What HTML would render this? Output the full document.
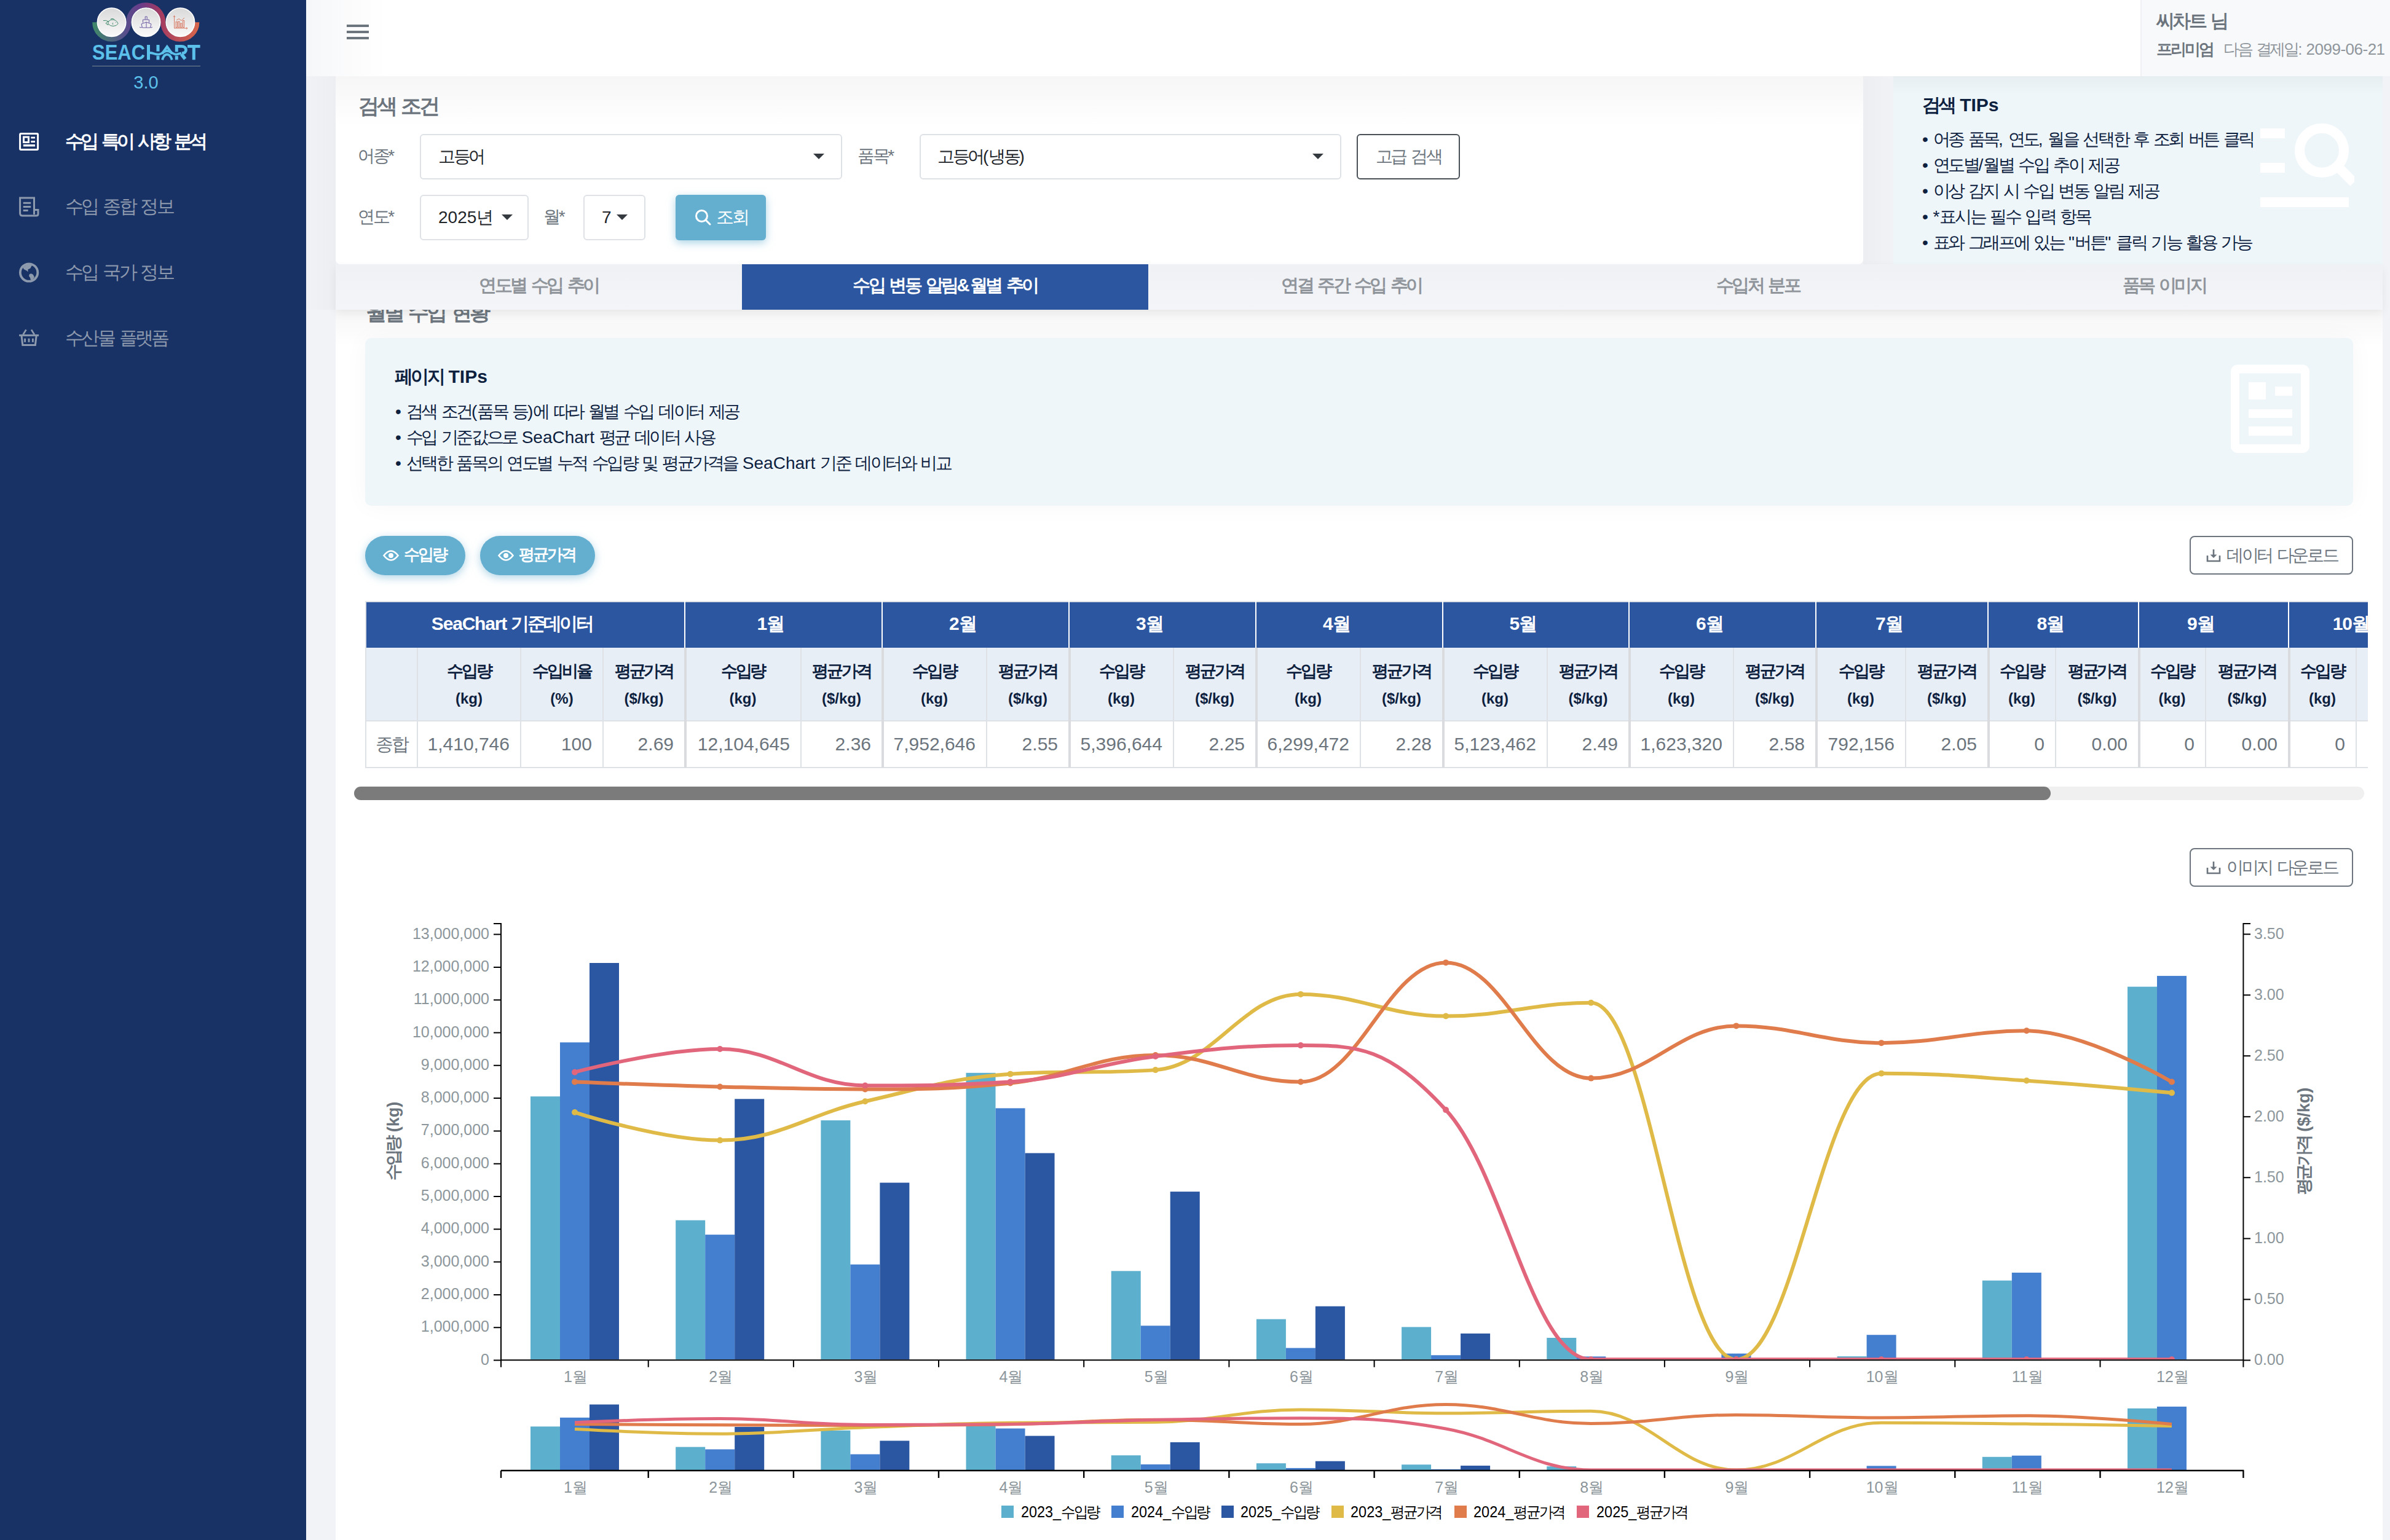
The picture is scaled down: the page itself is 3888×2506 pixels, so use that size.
<!DOCTYPE html><html><head><meta charset="utf-8"><title>SeaChart</title><style>
*{box-sizing:border-box;margin:0;padding:0}
html,body{width:3888px;height:2506px;overflow:hidden;background:#f2f3f7;font-family:"Liberation Sans",sans-serif}
.a{position:absolute}
.t{position:absolute;white-space:nowrap;line-height:1}
.k{letter-spacing:-0.12em}
.sb1 .k{letter-spacing:-0.155em}
</style></head><body>
<div class="a" style="left:0;top:0;width:498px;height:2506px;background:#183265"></div>
<svg class="a" style="left:140px;top:0" width="200" height="160" viewBox="140 0 200 160">
<defs><linearGradient id="lg" x1="150" y1="0" x2="326" y2="0" gradientUnits="userSpaceOnUse">
<stop offset="0" stop-color="#3f8a68"/><stop offset="0.3" stop-color="#56508c"/><stop offset="0.45" stop-color="#6a3c8a"/><stop offset="0.62" stop-color="#a23a62"/><stop offset="1" stop-color="#d9684a"/></linearGradient>
<linearGradient id="cg" x1="0" y1="0" x2="0" y2="1"><stop offset="0" stop-color="#d9d9d9"/><stop offset="1" stop-color="#fafafa"/></linearGradient></defs>
<path d="M154.2 36.2 A27.5 27.5 0 0 0 209.2 36.2 A28 28 0 0 1 265.3 36.2 A27.5 27.5 0 0 0 320.3 36.2" fill="none" stroke="url(#lg)" stroke-width="8"/>
<circle cx="181.6" cy="36.2" r="23.2" fill="url(#cg)" stroke="#fff" stroke-width="1.6"/>
<circle cx="237.5" cy="36.2" r="23.2" fill="url(#cg)" stroke="#fff" stroke-width="1.6"/>
<circle cx="293.4" cy="36.2" r="23.2" fill="url(#cg)" stroke="#fff" stroke-width="1.6"/>
<g fill="none" stroke="#3f8a6c" stroke-width="1">
<path d="M168 33.5 q5 -1 8 1.5 M172 38 q3 -3 4.5 -3.5 q-1 3 -0.5 6 q-2 -1 -4 -2.5"/>
<path d="M176.5 35 q3 -4 8 -3 q6 1.5 7.5 6.5 q-2 4 -8 4 q-5 0 -7.5 -3.5"/>
<path d="M180 31 q3 -1.5 6 0.5 M184 37 q-2 1.5 0 3 M188 36.5 h0.8"/>
</g>
<g fill="none" stroke="#6c5aa2" stroke-width="1">
<path d="M236.2 32 v-5 h3 v5 M232.5 37 v-5 h10 v5"/>
<path d="M230 39 l8 -3 l8 3 l-1.5 6 h-13z M238 36 v9"/>
<path d="M227 44 q2 2 4 0 M244 44 q2 2 4 0"/>
</g>
<g fill="none" stroke="#d77a64" stroke-width="1">
<path d="M283.5 26 v20 h21 M282 27.5 l1.5 -2 l1.5 2 M303 44.5 l2 1.5 l-2 1.5"/>
<rect x="286" y="35.5" width="2.2" height="9"/><rect x="289.8" y="35" width="2.2" height="9.5"/><rect x="293.6" y="38" width="2.2" height="6.5"/><rect x="297.4" y="33.5" width="2.2" height="11"/>
<path d="M287 33 l4 -2.5 l4 3 l5 -4.5"/>
</g>
<text x="150" y="97.4" font-family="Liberation Sans, sans-serif" font-weight="700" font-size="34.2" fill="#5cc1ea" textLength="86" lengthAdjust="spacingAndGlyphs">SEAC</text>
<g fill="#5cc1ea"><rect x="239" y="73" width="5" height="24.3"/><rect x="254.5" y="73" width="5" height="10.6"/><rect x="254.5" y="91.1" width="5" height="6.2"/>
<rect x="284.8" y="73" width="5" height="11.4"/><rect x="284.8" y="91.1" width="5" height="6.2"/>
<rect x="305" y="73" width="20.6" height="4.8"/><rect x="312.8" y="73" width="5" height="24.3"/></g>
<g fill="none" stroke="#5cc1ea">
<path d="M244 86 C249 86 252 88.6 257.5 88.6 C263 88.6 266.5 83 271.8 83 C277 83 281 88.6 286.5 88.6 C290 88.6 292 87 295 86.3" stroke-width="3.8"/>
<path d="M263.6 87.5 L271.8 76 L280 87.5" stroke-width="4.2" stroke-linejoin="miter" stroke-miterlimit="10"/>
<path d="M264 97.3 C266 91 268.5 88.6 271.8 88.6 C275 88.6 277.6 91 279.8 97.3" stroke-width="4"/>
<path d="M287 75.4 H295 C300 75.4 302.5 78 302.5 81.2 C302.5 84.5 300 86.6 296 86.6" stroke-width="4.8"/>
<path d="M295 88 L301.2 96" stroke-width="5.4"/>
</g>
<line x1="150" y1="107.5" x2="326" y2="107.5" stroke="#7b8a90" stroke-width="1.2"/>
<text x="237.5" y="144" text-anchor="middle" font-family="Liberation Sans, sans-serif" font-size="29" fill="#5cc1ea">3.0</text>
</svg>
<div class="t sb1" style="left:106px;top:215px;font-size:30px;font-weight:700;color:#ffffff"><span class="k">수입</span> <span class="k">특이</span> <span class="k">사항</span> <span class="k">분석</span></div>
<div class="t" style="left:106px;top:321px;font-size:30px;font-weight:400;color:#8d99ad"><span class="k">수입</span> <span class="k">종합</span> <span class="k">정보</span></div>
<div class="t" style="left:106px;top:428px;font-size:30px;font-weight:400;color:#8d99ad"><span class="k">수입</span> <span class="k">국가</span> <span class="k">정보</span></div>
<div class="t" style="left:106px;top:535px;font-size:30px;font-weight:400;color:#8d99ad"><span class="k">수산물</span> <span class="k">플랫폼</span></div>
<svg class="a" style="left:28px;top:212px" width="40" height="36" viewBox="28 212 40 36">
<rect x="32.6" y="217.6" width="29" height="26" rx="1.5" fill="none" stroke="#fff" stroke-width="3"/>
<rect x="38.5" y="223" width="8" height="8.5" fill="none" stroke="#fff" stroke-width="3"/>
<rect x="50.3" y="222.6" width="6.7" height="2.8" fill="#fff"/><rect x="50.3" y="229" width="6.7" height="3" fill="#fff"/>
<rect x="37.9" y="235" width="19.1" height="3.4" fill="#fff"/></svg>
<svg class="a" style="left:28px;top:316px" width="40" height="40" viewBox="28 316 40 40">
<path d="M55.5 344.5 V322 H32.6 V347 q0 4 4 4 H59 q3 0 3 -3 V341.5 H55.5 V349" fill="none" stroke="#8d99ad" stroke-width="3"/>
<rect x="37.7" y="328.8" width="12.5" height="3" fill="#8d99ad"/><rect x="37.7" y="335" width="12.5" height="3" fill="#8d99ad"/><rect x="37.7" y="341" width="8" height="3" fill="#8d99ad"/></svg>
<svg class="a" style="left:28px;top:424px" width="40" height="40" viewBox="28 424 40 40">
<circle cx="47.1" cy="443.5" r="14.2" fill="none" stroke="#8d99ad" stroke-width="3.8"/>
<path d="M37.5 434.5 l1 3.5 l5 2.5 l2 2 l0 -4 l4 -2 l2 -4 l3 -2 l-6 -2 z M48 446 q3 -2 6 1 l2 4 l-3 4 l-3 1 l-1 -4 l-2 -3 z" fill="#8d99ad"/></svg>
<svg class="a" style="left:28px;top:532px" width="40" height="36" viewBox="28 532 40 36">
<path d="M42.5 536.5 l-5 8 M51 536.5 l5 8" stroke="#8d99ad" stroke-width="2.6" fill="none"/>
<rect x="31.1" y="544.2" width="32" height="3" fill="#8d99ad"/>
<path d="M35 546 l1.8 15.5 h20.6 l1.8 -15.5" fill="none" stroke="#8d99ad" stroke-width="3"/>
<rect x="39.2" y="550.8" width="2.8" height="6" fill="#8d99ad"/><rect x="45.6" y="550.8" width="2.8" height="6" fill="#8d99ad"/><rect x="52" y="550.8" width="2.8" height="6" fill="#8d99ad"/></svg>
<div class="a" style="left:498px;top:0;width:3390px;height:124px;background:#fff"></div>
<div class="a" style="left:498px;top:0;width:130px;height:124px;background:linear-gradient(90deg,#f6f7f9,rgba(255,255,255,0))"></div>
<div class="a" style="left:3482px;top:0;width:406px;height:124px;background:#f8f9fb;border-left:2px solid #eef0f3"></div>
<div class="a" style="left:564px;top:40px;width:36px;height:4px;background:#6c757d"></div>
<div class="a" style="left:564px;top:50px;width:36px;height:4px;background:#6c757d"></div>
<div class="a" style="left:564px;top:60px;width:36px;height:4px;background:#6c757d"></div>
<div class="t" style="left:3508px;top:19px;font-size:30px;font-weight:700;color:#6c757d"><span class="k">씨차트</span> <span class="k">님</span></div>
<div class="t" style="left:3508px;top:67px;font-size:26px;font-weight:700;color:#6c757d"><span class="k">프리미엄</span></div>
<div class="t" style="left:3617px;top:67px;font-size:26px;color:#8f969c;letter-spacing:-0.5px"><span class="k">다음</span> <span class="k">결제일</span>: 2099-06-21</div>
<div class="a" style="left:546px;top:124px;width:2485px;height:306px;background:linear-gradient(#f6f6f7,#fff 80px);border-radius:0 0 8px 8px"></div>
<div class="a" style="left:498px;top:124px;width:48px;height:380px;background:linear-gradient(90deg,#f1f2f5,#eceef2)"></div>
<div class="a" style="left:3031px;top:124px;width:49px;height:306px;background:linear-gradient(90deg,#eceef2,#f0f2f5)"></div>
<div class="t" style="left:583px;top:155px;font-size:34px;font-weight:700;color:#6c757d"><span class="k">검색</span> <span class="k">조건</span></div>
<div class="t" style="left:582px;top:240px;font-size:28px;color:#6c757d"><span class="k">어종</span>*</div>
<div class="t" style="left:1395px;top:240px;font-size:28px;color:#6c757d"><span class="k">품목</span>*</div>
<div class="t" style="left:582px;top:339px;font-size:28px;color:#6c757d"><span class="k">연도</span>*</div>
<div class="t" style="left:884px;top:339px;font-size:28px;color:#6c757d"><span class="k">월</span>*</div>
<div class="a" style="left:683px;top:218px;width:687px;height:74px;border:2px solid #dee2e6;border-radius:6px;background:#fff"></div>
<div class="t" style="left:713px;top:241.0px;font-size:28px;color:#212529"><span class="k">고등어</span></div>
<svg class="a" style="left:1323px;top:250.0px" width="18" height="9"><path d="M0 0 H18 L9 9z" fill="#343a40"/></svg>
<div class="a" style="left:1496px;top:218px;width:686px;height:74px;border:2px solid #dee2e6;border-radius:6px;background:#fff"></div>
<div class="t" style="left:1525px;top:241.0px;font-size:28px;color:#212529"><span class="k">고등어</span>(<span class="k">냉동</span>)</div>
<svg class="a" style="left:2135px;top:250.0px" width="18" height="9"><path d="M0 0 H18 L9 9z" fill="#343a40"/></svg>
<div class="a" style="left:683px;top:317px;width:177px;height:74px;border:2px solid #dee2e6;border-radius:6px;background:#fff"></div>
<div class="t" style="left:713px;top:340.0px;font-size:28px;color:#212529">2025<span class="k">년</span></div>
<svg class="a" style="left:816px;top:349.0px" width="18" height="9"><path d="M0 0 H18 L9 9z" fill="#343a40"/></svg>
<div class="a" style="left:949px;top:317px;width:101px;height:74px;border:2px solid #dee2e6;border-radius:6px;background:#fff"></div>
<div class="t" style="left:979px;top:340.0px;font-size:28px;color:#212529">7</div>
<svg class="a" style="left:1003px;top:349.0px" width="18" height="9"><path d="M0 0 H18 L9 9z" fill="#343a40"/></svg>
<div class="a" style="left:2207px;top:218px;width:168px;height:74px;border:2px solid #495057;border-radius:6px"></div>
<div class="t" style="left:2207px;top:241px;width:168px;text-align:center;font-size:28px;color:#6c757d"><span class="k">고급</span> <span class="k">검색</span></div>
<div class="a" style="left:1099px;top:317px;width:147px;height:74px;background:#64aed0;border-radius:6px;box-shadow:0 4px 14px rgba(100,174,208,.55)"></div>
<svg class="a" style="left:1130px;top:340px" width="28" height="28" viewBox="0 0 28 28"><circle cx="11.5" cy="11.5" r="9" fill="none" stroke="#fff" stroke-width="3"/><path d="M18 18 L25 25" stroke="#fff" stroke-width="3" stroke-linecap="round"/></svg>
<div class="t" style="left:1165px;top:339px;font-size:29px;color:#fff"><span class="k">조회</span></div>
<div class="a" style="left:3080px;top:124px;width:796px;height:306px;background:#eef6fa"></div>
<div class="a" style="left:3080px;top:124px;width:796px;height:30px;background:linear-gradient(#e6eef2,rgba(238,246,250,0))"></div>
<div class="t" style="left:3127px;top:156px;font-size:30px;font-weight:700;color:#0d213f"><span class="k">검색</span> TIPs</div>
<div class="t" style="left:3127px;top:212.5px;font-size:28px;color:#0d213f">• <span class="k">어종</span> <span class="k">품목</span>, <span class="k">연도</span>, <span class="k">월을</span> <span class="k">선택한</span> <span class="k">후</span> <span class="k">조회</span> <span class="k">버튼</span> <span class="k">클릭</span></div>
<div class="t" style="left:3127px;top:254.5px;font-size:28px;color:#0d213f">• <span class="k">연도별</span>/<span class="k">월별</span> <span class="k">수입</span> <span class="k">추이</span> <span class="k">제공</span></div>
<div class="t" style="left:3127px;top:296.5px;font-size:28px;color:#0d213f">• <span class="k">이상</span> <span class="k">감지</span> <span class="k">시</span> <span class="k">수입</span> <span class="k">변동</span> <span class="k">알림</span> <span class="k">제공</span></div>
<div class="t" style="left:3127px;top:338.5px;font-size:28px;color:#0d213f">• *<span class="k">표시는</span> <span class="k">필수</span> <span class="k">입력</span> <span class="k">항목</span></div>
<div class="t" style="left:3127px;top:380.5px;font-size:28px;color:#0d213f">• <span class="k">표와</span> <span class="k">그래프에</span> <span class="k">있는</span> "<span class="k">버튼</span>" <span class="k">클릭</span> <span class="k">기능</span> <span class="k">활용</span> <span class="k">가능</span></div>
<svg class="a" style="left:3670px;top:195px" width="160" height="150" viewBox="3670 195 160 150">
<rect x="3677" y="209" width="40" height="16" fill="#fff"/><rect x="3677" y="265" width="40" height="16" fill="#fff"/><rect x="3677" y="321" width="144" height="16" fill="#fff"/>
<circle cx="3777" cy="244.8" r="36" fill="none" stroke="#fff" stroke-width="16"/><path d="M3800 268 L3829 297" stroke="#fff" stroke-width="16"/></svg>
<div class="a" style="left:0;top:0;width:3888px;height:504px;z-index:5">
<div class="a" style="left:546px;top:430px;width:3330px;height:74px;background:linear-gradient(#f0f1f5,#f4f5f8);box-shadow:0 6px 14px rgba(0,0,0,.06)"></div>
<div class="t" style="left:546px;top:450px;width:661px;text-align:center;font-size:29px;font-weight:700;color:#8f959b"><span class="k">연도별</span> <span class="k">수입</span> <span class="k">추이</span></div>
<div class="a" style="left:1207px;top:430px;width:661px;height:74px;background:#2c57a0"></div>
<div class="t" style="left:1207px;top:450px;width:661px;text-align:center;font-size:29px;font-weight:700;color:#fff"><span class="k">수입</span> <span class="k">변동</span> <span class="k">알림</span>&<span class="k">월별</span> <span class="k">추이</span></div>
<div class="t" style="left:1868px;top:450px;width:661px;text-align:center;font-size:29px;font-weight:700;color:#8f959b"><span class="k">연결</span> <span class="k">주간</span> <span class="k">수입</span> <span class="k">추이</span></div>
<div class="t" style="left:2529px;top:450px;width:661px;text-align:center;font-size:29px;font-weight:700;color:#8f959b"><span class="k">수입처</span> <span class="k">분포</span></div>
<div class="t" style="left:3190px;top:450px;width:661px;text-align:center;font-size:29px;font-weight:700;color:#8f959b"><span class="k">품목</span> <span class="k">이미지</span></div>
</div>
<div class="a" style="left:546px;top:470px;width:3330px;height:2100px;background:#fff"></div>
<div class="a" style="left:546px;top:504px;width:3330px;height:60px;background:linear-gradient(rgba(0,0,0,.035),rgba(0,0,0,0))"></div>
<div class="t" style="left:595px;top:491px;font-size:34px;font-weight:700;color:#6c757d"><span class="k">월별</span> <span class="k">수입</span> <span class="k">현황</span></div>
<div class="a" style="left:594px;top:550px;width:3234px;height:273px;background:#eef6fa;border-radius:10px;box-shadow:0 0 40px rgba(0,0,0,.035)"></div>
<div class="t" style="left:642px;top:598px;font-size:30px;font-weight:700;color:#0d213f"><span class="k">페이지</span> TIPs</div>
<div class="t" style="left:643px;top:656px;font-size:28px;color:#0d213f">• <span class="k">검색</span> <span class="k">조건</span>(<span class="k">품목</span> <span class="k">등</span>)<span class="k">에</span> <span class="k">따라</span> <span class="k">월별</span> <span class="k">수입</span> <span class="k">데이터</span> <span class="k">제공</span></div>
<div class="t" style="left:643px;top:698px;font-size:28px;color:#0d213f">• <span class="k">수입</span> <span class="k">기준값으로</span> SeaChart <span class="k">평균</span> <span class="k">데이터</span> <span class="k">사용</span></div>
<div class="t" style="left:643px;top:740px;font-size:28px;color:#0d213f">• <span class="k">선택한</span> <span class="k">품목의</span> <span class="k">연도별</span> <span class="k">누적</span> <span class="k">수입량</span> <span class="k">및</span> <span class="k">평균가격을</span> SeaChart <span class="k">기준</span> <span class="k">데이터와</span> <span class="k">비교</span></div>
<svg class="a" style="left:3625px;top:590px" width="140" height="150" viewBox="3625 590 140 150">
<rect x="3636" y="600.6" width="114" height="129.4" rx="4" fill="none" stroke="#fff" stroke-width="14"/>
<rect x="3658" y="622" width="28" height="28" fill="#fff"/><rect x="3701" y="629" width="28" height="15" fill="#fff"/>
<rect x="3658" y="666" width="71" height="14" fill="#fff"/><rect x="3658" y="694" width="71" height="15" fill="#fff"/></svg>
<div class="a" style="left:594px;top:872px;width:163px;height:64px;background:#64aed0;border-radius:32px;box-shadow:0 4px 14px rgba(100,174,208,.5)"></div>
<svg class="a" style="left:623px;top:893px" width="26" height="22" viewBox="0 0 26 22"><path d="M1.5 11 Q13 -4 24.5 11 Q13 26 1.5 11z" fill="none" stroke="#fff" stroke-width="2.6"/><circle cx="13" cy="11" r="4" fill="#fff"/></svg>
<div class="t" style="left:657px;top:889px;font-size:26px;font-weight:700;color:#fff"><span class="k">수입량</span></div>
<div class="a" style="left:781px;top:872px;width:187px;height:64px;background:#64aed0;border-radius:32px;box-shadow:0 4px 14px rgba(100,174,208,.5)"></div>
<svg class="a" style="left:810px;top:893px" width="26" height="22" viewBox="0 0 26 22"><path d="M1.5 11 Q13 -4 24.5 11 Q13 26 1.5 11z" fill="none" stroke="#fff" stroke-width="2.6"/><circle cx="13" cy="11" r="4" fill="#fff"/></svg>
<div class="t" style="left:844px;top:889px;font-size:26px;font-weight:700;color:#fff"><span class="k">평균가격</span></div>
<div class="a" style="left:3562px;top:872px;width:266px;height:63px;border:2px solid #6c757d;border-radius:8px;background:#fff"></div>
<svg class="a" style="left:3589px;top:893px" width="24" height="22" viewBox="0 0 24 22"><path d="M2 11 V20 H22 V11" fill="none" stroke="#6c757d" stroke-width="2.6"/><path d="M12 1 V13" stroke="#6c757d" stroke-width="2.6"/><path d="M6.5 9.5 L12 15 L17.5 9.5z" fill="#6c757d"/></svg>
<div class="t" style="left:3622px;top:890px;font-size:28px;color:#6c757d"><span class="k">데이터</span> <span class="k">다운로드</span></div>
<div class="a" style="left:3562px;top:1380px;width:266px;height:63px;border:2px solid #6c757d;border-radius:8px;background:#fff"></div>
<svg class="a" style="left:3589px;top:1401px" width="24" height="22" viewBox="0 0 24 22"><path d="M2 11 V20 H22 V11" fill="none" stroke="#6c757d" stroke-width="2.6"/><path d="M12 1 V13" stroke="#6c757d" stroke-width="2.6"/><path d="M6.5 9.5 L12 15 L17.5 9.5z" fill="#6c757d"/></svg>
<div class="t" style="left:3622px;top:1398px;font-size:28px;color:#6c757d"><span class="k">이미지</span> <span class="k">다운로드</span></div>
<div class="a" style="left:594px;top:978px;width:3258px;height:273px;overflow:hidden"><div class="a" style="left:0px;top:0px;width:4000px;height:76px;background:#2c56a0"></div><div class="a" style="left:0px;top:76px;width:4000px;height:119px;background:#e8eef6"></div><div class="a" style="left:0px;top:195px;width:4000px;height:76px;background:#fff"></div><div class="a" style="left:0px;top:0px;width:4000px;height:2px;background:#dfe2e6"></div><div class="a" style="left:0px;top:194px;width:4000px;height:2px;background:#dee2e6"></div><div class="a" style="left:0px;top:270px;width:4000px;height:2px;background:#dee2e6"></div><div class="a" style="left:0px;top:0px;width:2px;height:272px;background:#dee2e6"></div><div class="t" style="left:-21px;top:37px;width:519px;text-align:center;transform:translateY(-50%);font-size:30px;font-weight:700;color:#fff;letter-spacing:-1.2px">SeaChart <span class="k">기준데이터</span></div><div class="t" style="left:1px;top:233px;width:84px;text-align:center;transform:translateY(-50%);font-size:29px;color:#6c757d"><span class="k">종합</span></div><div class="a" style="left:84px;top:76px;width:2px;height:195px;background:#dee2e6"></div><div class="t" style="left:85px;top:114px;width:168px;text-align:center;transform:translateY(-50%);font-size:27px;font-weight:700;color:#0d213f"><span class="k">수입량</span></div><div class="t" style="left:85px;top:159px;width:168px;text-align:center;transform:translateY(-50%);font-size:24px;font-weight:700;color:#0d213f">(kg)</div><div class="t" style="left:85px;top:233px;width:150px;text-align:right;transform:translateY(-50%);font-size:30px;color:#6c757d">1,410,746</div><div class="a" style="left:252px;top:76px;width:2px;height:195px;background:#dee2e6"></div><div class="t" style="left:253px;top:114px;width:134px;text-align:center;transform:translateY(-50%);font-size:27px;font-weight:700;color:#0d213f"><span class="k">수입비율</span></div><div class="t" style="left:253px;top:159px;width:134px;text-align:center;transform:translateY(-50%);font-size:24px;font-weight:700;color:#0d213f">(%)</div><div class="t" style="left:253px;top:233px;width:116px;text-align:right;transform:translateY(-50%);font-size:30px;color:#6c757d">100</div><div class="a" style="left:386px;top:76px;width:2px;height:195px;background:#dee2e6"></div><div class="t" style="left:387px;top:114px;width:133px;text-align:center;transform:translateY(-50%);font-size:27px;font-weight:700;color:#0d213f"><span class="k">평균가격</span></div><div class="t" style="left:387px;top:159px;width:133px;text-align:center;transform:translateY(-50%);font-size:24px;font-weight:700;color:#0d213f">($/kg)</div><div class="t" style="left:387px;top:233px;width:115px;text-align:right;transform:translateY(-50%);font-size:30px;color:#6c757d">2.69</div><div class="t" style="left:498px;top:37px;width:321px;text-align:center;transform:translateY(-50%);font-size:30px;font-weight:700;color:#fff;letter-spacing:-1.2px">1<span class="k">월</span></div><div class="a" style="left:519px;top:0px;width:2px;height:76px;background:#fff"></div><div class="a" style="left:519px;top:76px;width:4px;height:195px;background:#d9dbde"></div><div class="t" style="left:520px;top:114px;width:189px;text-align:center;transform:translateY(-50%);font-size:27px;font-weight:700;color:#0d213f"><span class="k">수입량</span></div><div class="t" style="left:520px;top:159px;width:189px;text-align:center;transform:translateY(-50%);font-size:24px;font-weight:700;color:#0d213f">(kg)</div><div class="t" style="left:520px;top:233px;width:171px;text-align:right;transform:translateY(-50%);font-size:30px;color:#6c757d">12,104,645</div><div class="a" style="left:708px;top:76px;width:2px;height:195px;background:#dee2e6"></div><div class="t" style="left:709px;top:114px;width:132px;text-align:center;transform:translateY(-50%);font-size:27px;font-weight:700;color:#0d213f"><span class="k">평균가격</span></div><div class="t" style="left:709px;top:159px;width:132px;text-align:center;transform:translateY(-50%);font-size:24px;font-weight:700;color:#0d213f">($/kg)</div><div class="t" style="left:709px;top:233px;width:114px;text-align:right;transform:translateY(-50%);font-size:30px;color:#6c757d">2.36</div><div class="t" style="left:819px;top:37px;width:304px;text-align:center;transform:translateY(-50%);font-size:30px;font-weight:700;color:#fff;letter-spacing:-1.2px">2<span class="k">월</span></div><div class="a" style="left:840px;top:0px;width:2px;height:76px;background:#fff"></div><div class="a" style="left:840px;top:76px;width:4px;height:195px;background:#d9dbde"></div><div class="t" style="left:841px;top:114px;width:170px;text-align:center;transform:translateY(-50%);font-size:27px;font-weight:700;color:#0d213f"><span class="k">수입량</span></div><div class="t" style="left:841px;top:159px;width:170px;text-align:center;transform:translateY(-50%);font-size:24px;font-weight:700;color:#0d213f">(kg)</div><div class="t" style="left:841px;top:233px;width:152px;text-align:right;transform:translateY(-50%);font-size:30px;color:#6c757d">7,952,646</div><div class="a" style="left:1010px;top:76px;width:2px;height:195px;background:#dee2e6"></div><div class="t" style="left:1011px;top:114px;width:134px;text-align:center;transform:translateY(-50%);font-size:27px;font-weight:700;color:#0d213f"><span class="k">평균가격</span></div><div class="t" style="left:1011px;top:159px;width:134px;text-align:center;transform:translateY(-50%);font-size:24px;font-weight:700;color:#0d213f">($/kg)</div><div class="t" style="left:1011px;top:233px;width:116px;text-align:right;transform:translateY(-50%);font-size:30px;color:#6c757d">2.55</div><div class="t" style="left:1123px;top:37px;width:304px;text-align:center;transform:translateY(-50%);font-size:30px;font-weight:700;color:#fff;letter-spacing:-1.2px">3<span class="k">월</span></div><div class="a" style="left:1144px;top:0px;width:2px;height:76px;background:#fff"></div><div class="a" style="left:1144px;top:76px;width:4px;height:195px;background:#d9dbde"></div><div class="t" style="left:1145px;top:114px;width:170px;text-align:center;transform:translateY(-50%);font-size:27px;font-weight:700;color:#0d213f"><span class="k">수입량</span></div><div class="t" style="left:1145px;top:159px;width:170px;text-align:center;transform:translateY(-50%);font-size:24px;font-weight:700;color:#0d213f">(kg)</div><div class="t" style="left:1145px;top:233px;width:152px;text-align:right;transform:translateY(-50%);font-size:30px;color:#6c757d">5,396,644</div><div class="a" style="left:1314px;top:76px;width:2px;height:195px;background:#dee2e6"></div><div class="t" style="left:1315px;top:114px;width:134px;text-align:center;transform:translateY(-50%);font-size:27px;font-weight:700;color:#0d213f"><span class="k">평균가격</span></div><div class="t" style="left:1315px;top:159px;width:134px;text-align:center;transform:translateY(-50%);font-size:24px;font-weight:700;color:#0d213f">($/kg)</div><div class="t" style="left:1315px;top:233px;width:116px;text-align:right;transform:translateY(-50%);font-size:30px;color:#6c757d">2.25</div><div class="t" style="left:1427px;top:37px;width:304px;text-align:center;transform:translateY(-50%);font-size:30px;font-weight:700;color:#fff;letter-spacing:-1.2px">4<span class="k">월</span></div><div class="a" style="left:1448px;top:0px;width:2px;height:76px;background:#fff"></div><div class="a" style="left:1448px;top:76px;width:4px;height:195px;background:#d9dbde"></div><div class="t" style="left:1449px;top:114px;width:170px;text-align:center;transform:translateY(-50%);font-size:27px;font-weight:700;color:#0d213f"><span class="k">수입량</span></div><div class="t" style="left:1449px;top:159px;width:170px;text-align:center;transform:translateY(-50%);font-size:24px;font-weight:700;color:#0d213f">(kg)</div><div class="t" style="left:1449px;top:233px;width:152px;text-align:right;transform:translateY(-50%);font-size:30px;color:#6c757d">6,299,472</div><div class="a" style="left:1618px;top:76px;width:2px;height:195px;background:#dee2e6"></div><div class="t" style="left:1619px;top:114px;width:134px;text-align:center;transform:translateY(-50%);font-size:27px;font-weight:700;color:#0d213f"><span class="k">평균가격</span></div><div class="t" style="left:1619px;top:159px;width:134px;text-align:center;transform:translateY(-50%);font-size:24px;font-weight:700;color:#0d213f">($/kg)</div><div class="t" style="left:1619px;top:233px;width:116px;text-align:right;transform:translateY(-50%);font-size:30px;color:#6c757d">2.28</div><div class="t" style="left:1731px;top:37px;width:303px;text-align:center;transform:translateY(-50%);font-size:30px;font-weight:700;color:#fff;letter-spacing:-1.2px">5<span class="k">월</span></div><div class="a" style="left:1752px;top:0px;width:2px;height:76px;background:#fff"></div><div class="a" style="left:1752px;top:76px;width:4px;height:195px;background:#d9dbde"></div><div class="t" style="left:1753px;top:114px;width:170px;text-align:center;transform:translateY(-50%);font-size:27px;font-weight:700;color:#0d213f"><span class="k">수입량</span></div><div class="t" style="left:1753px;top:159px;width:170px;text-align:center;transform:translateY(-50%);font-size:24px;font-weight:700;color:#0d213f">(kg)</div><div class="t" style="left:1753px;top:233px;width:152px;text-align:right;transform:translateY(-50%);font-size:30px;color:#6c757d">5,123,462</div><div class="a" style="left:1922px;top:76px;width:2px;height:195px;background:#dee2e6"></div><div class="t" style="left:1923px;top:114px;width:133px;text-align:center;transform:translateY(-50%);font-size:27px;font-weight:700;color:#0d213f"><span class="k">평균가격</span></div><div class="t" style="left:1923px;top:159px;width:133px;text-align:center;transform:translateY(-50%);font-size:24px;font-weight:700;color:#0d213f">($/kg)</div><div class="t" style="left:1923px;top:233px;width:115px;text-align:right;transform:translateY(-50%);font-size:30px;color:#6c757d">2.49</div><div class="t" style="left:2034px;top:37px;width:304px;text-align:center;transform:translateY(-50%);font-size:30px;font-weight:700;color:#fff;letter-spacing:-1.2px">6<span class="k">월</span></div><div class="a" style="left:2055px;top:0px;width:2px;height:76px;background:#fff"></div><div class="a" style="left:2055px;top:76px;width:4px;height:195px;background:#d9dbde"></div><div class="t" style="left:2056px;top:114px;width:170px;text-align:center;transform:translateY(-50%);font-size:27px;font-weight:700;color:#0d213f"><span class="k">수입량</span></div><div class="t" style="left:2056px;top:159px;width:170px;text-align:center;transform:translateY(-50%);font-size:24px;font-weight:700;color:#0d213f">(kg)</div><div class="t" style="left:2056px;top:233px;width:152px;text-align:right;transform:translateY(-50%);font-size:30px;color:#6c757d">1,623,320</div><div class="a" style="left:2225px;top:76px;width:2px;height:195px;background:#dee2e6"></div><div class="t" style="left:2226px;top:114px;width:134px;text-align:center;transform:translateY(-50%);font-size:27px;font-weight:700;color:#0d213f"><span class="k">평균가격</span></div><div class="t" style="left:2226px;top:159px;width:134px;text-align:center;transform:translateY(-50%);font-size:24px;font-weight:700;color:#0d213f">($/kg)</div><div class="t" style="left:2226px;top:233px;width:116px;text-align:right;transform:translateY(-50%);font-size:30px;color:#6c757d">2.58</div><div class="t" style="left:2338px;top:37px;width:280px;text-align:center;transform:translateY(-50%);font-size:30px;font-weight:700;color:#fff;letter-spacing:-1.2px">7<span class="k">월</span></div><div class="a" style="left:2359px;top:0px;width:2px;height:76px;background:#fff"></div><div class="a" style="left:2359px;top:76px;width:4px;height:195px;background:#d9dbde"></div><div class="t" style="left:2360px;top:114px;width:146px;text-align:center;transform:translateY(-50%);font-size:27px;font-weight:700;color:#0d213f"><span class="k">수입량</span></div><div class="t" style="left:2360px;top:159px;width:146px;text-align:center;transform:translateY(-50%);font-size:24px;font-weight:700;color:#0d213f">(kg)</div><div class="t" style="left:2360px;top:233px;width:128px;text-align:right;transform:translateY(-50%);font-size:30px;color:#6c757d">792,156</div><div class="a" style="left:2505px;top:76px;width:2px;height:195px;background:#dee2e6"></div><div class="t" style="left:2506px;top:114px;width:134px;text-align:center;transform:translateY(-50%);font-size:27px;font-weight:700;color:#0d213f"><span class="k">평균가격</span></div><div class="t" style="left:2506px;top:159px;width:134px;text-align:center;transform:translateY(-50%);font-size:24px;font-weight:700;color:#0d213f">($/kg)</div><div class="t" style="left:2506px;top:233px;width:116px;text-align:right;transform:translateY(-50%);font-size:30px;color:#6c757d">2.05</div><div class="t" style="left:2618px;top:37px;width:245px;text-align:center;transform:translateY(-50%);font-size:30px;font-weight:700;color:#fff;letter-spacing:-1.2px">8<span class="k">월</span></div><div class="a" style="left:2639px;top:0px;width:2px;height:76px;background:#fff"></div><div class="a" style="left:2639px;top:76px;width:4px;height:195px;background:#d9dbde"></div><div class="t" style="left:2640px;top:114px;width:110px;text-align:center;transform:translateY(-50%);font-size:27px;font-weight:700;color:#0d213f"><span class="k">수입량</span></div><div class="t" style="left:2640px;top:159px;width:110px;text-align:center;transform:translateY(-50%);font-size:24px;font-weight:700;color:#0d213f">(kg)</div><div class="t" style="left:2640px;top:233px;width:92px;text-align:right;transform:translateY(-50%);font-size:30px;color:#6c757d">0</div><div class="a" style="left:2749px;top:76px;width:2px;height:195px;background:#dee2e6"></div><div class="t" style="left:2750px;top:114px;width:135px;text-align:center;transform:translateY(-50%);font-size:27px;font-weight:700;color:#0d213f"><span class="k">평균가격</span></div><div class="t" style="left:2750px;top:159px;width:135px;text-align:center;transform:translateY(-50%);font-size:24px;font-weight:700;color:#0d213f">($/kg)</div><div class="t" style="left:2750px;top:233px;width:117px;text-align:right;transform:translateY(-50%);font-size:30px;color:#6c757d">0.00</div><div class="t" style="left:2863px;top:37px;width:244px;text-align:center;transform:translateY(-50%);font-size:30px;font-weight:700;color:#fff;letter-spacing:-1.2px">9<span class="k">월</span></div><div class="a" style="left:2884px;top:0px;width:2px;height:76px;background:#fff"></div><div class="a" style="left:2884px;top:76px;width:4px;height:195px;background:#d9dbde"></div><div class="t" style="left:2885px;top:114px;width:109px;text-align:center;transform:translateY(-50%);font-size:27px;font-weight:700;color:#0d213f"><span class="k">수입량</span></div><div class="t" style="left:2885px;top:159px;width:109px;text-align:center;transform:translateY(-50%);font-size:24px;font-weight:700;color:#0d213f">(kg)</div><div class="t" style="left:2885px;top:233px;width:91px;text-align:right;transform:translateY(-50%);font-size:30px;color:#6c757d">0</div><div class="a" style="left:2993px;top:76px;width:2px;height:195px;background:#dee2e6"></div><div class="t" style="left:2994px;top:114px;width:135px;text-align:center;transform:translateY(-50%);font-size:27px;font-weight:700;color:#0d213f"><span class="k">평균가격</span></div><div class="t" style="left:2994px;top:159px;width:135px;text-align:center;transform:translateY(-50%);font-size:24px;font-weight:700;color:#0d213f">($/kg)</div><div class="t" style="left:2994px;top:233px;width:117px;text-align:right;transform:translateY(-50%);font-size:30px;color:#6c757d">0.00</div><div class="t" style="left:3107px;top:37px;width:245px;text-align:center;transform:translateY(-50%);font-size:30px;font-weight:700;color:#fff;letter-spacing:-1.2px">10<span class="k">월</span></div><div class="a" style="left:3128px;top:0px;width:2px;height:76px;background:#fff"></div><div class="a" style="left:3128px;top:76px;width:4px;height:195px;background:#d9dbde"></div><div class="t" style="left:3129px;top:114px;width:110px;text-align:center;transform:translateY(-50%);font-size:27px;font-weight:700;color:#0d213f"><span class="k">수입량</span></div><div class="t" style="left:3129px;top:159px;width:110px;text-align:center;transform:translateY(-50%);font-size:24px;font-weight:700;color:#0d213f">(kg)</div><div class="t" style="left:3129px;top:233px;width:92px;text-align:right;transform:translateY(-50%);font-size:30px;color:#6c757d">0</div><div class="a" style="left:3238px;top:76px;width:2px;height:195px;background:#dee2e6"></div><div class="t" style="left:3239px;top:114px;width:135px;text-align:center;transform:translateY(-50%);font-size:27px;font-weight:700;color:#0d213f"><span class="k">평균가격</span></div><div class="t" style="left:3239px;top:159px;width:135px;text-align:center;transform:translateY(-50%);font-size:24px;font-weight:700;color:#0d213f">($/kg)</div><div class="t" style="left:3239px;top:233px;width:117px;text-align:right;transform:translateY(-50%);font-size:30px;color:#6c757d">0.00</div></div>
<div class="a" style="left:576px;top:1280px;width:3270px;height:22px;background:#f0f0f0;border-radius:11px"></div>
<div class="a" style="left:576px;top:1280px;width:2760px;height:22px;background:#7b7b7b;border-radius:11px"></div>
<svg class="a" style="left:546px;top:1450px" width="3330" height="1056" viewBox="546 1450 3330 1056" font-family="Liberation Sans, sans-serif"><defs><clipPath id="pc"><rect x="815" y="1400" width="2835" height="812.2"/></clipPath><clipPath id="nc"><rect x="815" y="2250" width="2835" height="142"/></clipPath></defs><rect x="863.00" y="1784.20" width="48" height="428.00" fill="#5cb0ce"/><rect x="1099.18" y="1985.67" width="48" height="226.52" fill="#5cb0ce"/><rect x="1335.36" y="1823.11" width="48" height="389.09" fill="#5cb0ce"/><rect x="1571.54" y="1745.82" width="48" height="466.38" fill="#5cb0ce"/><rect x="1807.72" y="2068.29" width="48" height="143.91" fill="#5cb0ce"/><rect x="2043.90" y="2146.64" width="48" height="65.56" fill="#5cb0ce"/><rect x="2280.08" y="2159.43" width="48" height="52.77" fill="#5cb0ce"/><rect x="2516.26" y="2177.02" width="48" height="35.18" fill="#5cb0ce"/><rect x="2988.62" y="2207.14" width="48" height="5.06" fill="#5cb0ce"/><rect x="3224.80" y="2083.75" width="48" height="128.45" fill="#5cb0ce"/><rect x="3460.98" y="1605.65" width="48" height="606.55" fill="#5cb0ce"/><rect x="911.00" y="1696.26" width="48" height="515.94" fill="#437ecf"/><rect x="1147.18" y="2009.13" width="48" height="203.07" fill="#437ecf"/><rect x="1383.36" y="2057.63" width="48" height="154.57" fill="#437ecf"/><rect x="1619.54" y="1803.39" width="48" height="408.81" fill="#437ecf"/><rect x="1855.72" y="2157.30" width="48" height="54.90" fill="#437ecf"/><rect x="2091.90" y="2193.54" width="48" height="18.65" fill="#437ecf"/><rect x="2328.08" y="2205.27" width="48" height="6.93" fill="#437ecf"/><rect x="2564.26" y="2207.40" width="48" height="4.80" fill="#437ecf"/><rect x="2800.44" y="2202.61" width="48" height="9.59" fill="#437ecf"/><rect x="3036.62" y="2172.22" width="48" height="39.97" fill="#437ecf"/><rect x="3272.80" y="2070.95" width="48" height="141.24" fill="#437ecf"/><rect x="3508.98" y="1588.06" width="48" height="624.14" fill="#437ecf"/><rect x="959.00" y="1567.02" width="48" height="645.18" fill="#2b56a1"/><rect x="1195.18" y="1788.32" width="48" height="423.88" fill="#2b56a1"/><rect x="1431.36" y="1924.56" width="48" height="287.64" fill="#2b56a1"/><rect x="1667.54" y="1876.44" width="48" height="335.76" fill="#2b56a1"/><rect x="1903.72" y="1939.12" width="48" height="273.08" fill="#2b56a1"/><rect x="2139.90" y="2125.68" width="48" height="86.52" fill="#2b56a1"/><rect x="2376.08" y="2169.98" width="48" height="42.22" fill="#2b56a1"/><path clip-path="url(#pc)" d="M935.00 1810.06 C935.00 1810.06 1076.71 1855.62 1171.18 1855.62 C1265.65 1855.62 1312.89 1813.82 1407.36 1792.23 C1501.83 1770.64 1549.07 1754.19 1643.54 1747.66 C1738.01 1741.12 1785.25 1747.66 1879.72 1741.12 C1974.19 1734.58 2021.43 1617.90 2115.90 1617.90 C2210.37 1617.90 2257.61 1653.56 2352.08 1653.56 C2446.55 1653.56 2493.79 1631.77 2588.26 1631.77 C2682.73 1631.77 2729.97 2212.20 2824.44 2212.20 C2918.91 2212.20 2966.15 1746.66 3060.62 1746.66 C3155.09 1746.66 3202.33 1752.21 3296.80 1758.55 C3391.27 1764.89 3532.98 1778.36 3532.98 1778.36" fill="none" stroke="#e0ba47" stroke-width="6" stroke-linejoin="round" stroke-linecap="round"/><circle clip-path="url(#pc)" cx="935.00" cy="1810.06" r="5" fill="#e0ba47"/><circle clip-path="url(#pc)" cx="1171.18" cy="1855.62" r="5" fill="#e0ba47"/><circle clip-path="url(#pc)" cx="1407.36" cy="1792.23" r="5" fill="#e0ba47"/><circle clip-path="url(#pc)" cx="1643.54" cy="1747.66" r="5" fill="#e0ba47"/><circle clip-path="url(#pc)" cx="1879.72" cy="1741.12" r="5" fill="#e0ba47"/><circle clip-path="url(#pc)" cx="2115.90" cy="1617.90" r="5" fill="#e0ba47"/><circle clip-path="url(#pc)" cx="2352.08" cy="1653.56" r="5" fill="#e0ba47"/><circle clip-path="url(#pc)" cx="2588.26" cy="1631.77" r="5" fill="#e0ba47"/><circle clip-path="url(#pc)" cx="2824.44" cy="2212.20" r="5" fill="#e0ba47"/><circle clip-path="url(#pc)" cx="3060.62" cy="1746.66" r="5" fill="#e0ba47"/><circle clip-path="url(#pc)" cx="3296.80" cy="1758.55" r="5" fill="#e0ba47"/><circle clip-path="url(#pc)" cx="3532.98" cy="1778.36" r="5" fill="#e0ba47"/><path clip-path="url(#pc)" d="M935.00 1760.53 C935.00 1760.53 1076.71 1766.08 1171.18 1768.46 C1265.65 1770.83 1312.89 1772.42 1407.36 1772.42 C1501.83 1772.42 1549.07 1772.42 1643.54 1762.51 C1738.01 1752.61 1785.25 1716.95 1879.72 1716.95 C1974.19 1716.95 2021.43 1760.53 2115.90 1760.53 C2210.37 1760.53 2257.61 1566.39 2352.08 1566.39 C2446.55 1566.39 2493.79 1754.59 2588.26 1754.59 C2682.73 1754.59 2729.97 1669.41 2824.44 1669.41 C2918.91 1669.41 2966.15 1697.14 3060.62 1697.14 C3155.09 1697.14 3202.33 1677.33 3296.80 1677.33 C3391.27 1677.33 3532.98 1760.53 3532.98 1760.53" fill="none" stroke="#e07c4b" stroke-width="6" stroke-linejoin="round" stroke-linecap="round"/><circle clip-path="url(#pc)" cx="935.00" cy="1760.53" r="5" fill="#e07c4b"/><circle clip-path="url(#pc)" cx="1171.18" cy="1768.46" r="5" fill="#e07c4b"/><circle clip-path="url(#pc)" cx="1407.36" cy="1772.42" r="5" fill="#e07c4b"/><circle clip-path="url(#pc)" cx="1643.54" cy="1762.51" r="5" fill="#e07c4b"/><circle clip-path="url(#pc)" cx="1879.72" cy="1716.95" r="5" fill="#e07c4b"/><circle clip-path="url(#pc)" cx="2115.90" cy="1760.53" r="5" fill="#e07c4b"/><circle clip-path="url(#pc)" cx="2352.08" cy="1566.39" r="5" fill="#e07c4b"/><circle clip-path="url(#pc)" cx="2588.26" cy="1754.59" r="5" fill="#e07c4b"/><circle clip-path="url(#pc)" cx="2824.44" cy="1669.41" r="5" fill="#e07c4b"/><circle clip-path="url(#pc)" cx="3060.62" cy="1697.14" r="5" fill="#e07c4b"/><circle clip-path="url(#pc)" cx="3296.80" cy="1677.33" r="5" fill="#e07c4b"/><circle clip-path="url(#pc)" cx="3532.98" cy="1760.53" r="5" fill="#e07c4b"/><path clip-path="url(#pc)" d="M935.00 1744.68 C935.00 1744.68 1076.71 1707.04 1171.18 1707.04 C1265.65 1707.04 1312.89 1766.47 1407.36 1766.47 C1501.83 1766.47 1549.07 1766.47 1643.54 1760.53 C1738.01 1754.59 1785.25 1730.82 1879.72 1718.93 C1974.19 1707.04 2021.43 1701.10 2115.90 1701.10 C2210.37 1701.10 2257.61 1703.88 2352.08 1806.09 C2446.55 1908.31 2493.79 2212.20 2588.26 2212.20 C2682.73 2212.20 2729.97 2212.20 2824.44 2212.20 C2918.91 2212.20 2966.15 2212.20 3060.62 2212.20 C3155.09 2212.20 3202.33 2212.20 3296.80 2212.20 C3391.27 2212.20 3532.98 2212.20 3532.98 2212.20" fill="none" stroke="#e2667b" stroke-width="6" stroke-linejoin="round" stroke-linecap="round"/><circle clip-path="url(#pc)" cx="935.00" cy="1744.68" r="5" fill="#e2667b"/><circle clip-path="url(#pc)" cx="1171.18" cy="1707.04" r="5" fill="#e2667b"/><circle clip-path="url(#pc)" cx="1407.36" cy="1766.47" r="5" fill="#e2667b"/><circle clip-path="url(#pc)" cx="1643.54" cy="1760.53" r="5" fill="#e2667b"/><circle clip-path="url(#pc)" cx="1879.72" cy="1718.93" r="5" fill="#e2667b"/><circle clip-path="url(#pc)" cx="2115.90" cy="1701.10" r="5" fill="#e2667b"/><circle clip-path="url(#pc)" cx="2352.08" cy="1806.09" r="5" fill="#e2667b"/><circle clip-path="url(#pc)" cx="2588.26" cy="2212.20" r="5" fill="#e2667b"/><circle clip-path="url(#pc)" cx="2824.44" cy="2212.20" r="5" fill="#e2667b"/><circle clip-path="url(#pc)" cx="3060.62" cy="2212.20" r="5" fill="#e2667b"/><circle clip-path="url(#pc)" cx="3296.80" cy="2212.20" r="5" fill="#e2667b"/><circle clip-path="url(#pc)" cx="3532.98" cy="2212.20" r="5" fill="#e2667b"/><path d="M815 1502 V2214.2 M803 1503 H815 M814 2213.2 H3650.4 M3649.4 1502 V2214.2 M3649.4 1503 H3661" stroke="#000" stroke-width="2" fill="none"/><text x="796" y="2220.5" text-anchor="end" font-size="25" fill="#8c969b">0</text><text x="796" y="2167.2" text-anchor="end" font-size="25" fill="#8c969b">1,000,000</text><text x="796" y="2113.9" text-anchor="end" font-size="25" fill="#8c969b">2,000,000</text><text x="796" y="2060.6" text-anchor="end" font-size="25" fill="#8c969b">3,000,000</text><text x="796" y="2007.3" text-anchor="end" font-size="25" fill="#8c969b">4,000,000</text><text x="796" y="1954.0" text-anchor="end" font-size="25" fill="#8c969b">5,000,000</text><text x="796" y="1900.7" text-anchor="end" font-size="25" fill="#8c969b">6,000,000</text><text x="796" y="1847.4" text-anchor="end" font-size="25" fill="#8c969b">7,000,000</text><text x="796" y="1794.1" text-anchor="end" font-size="25" fill="#8c969b">8,000,000</text><text x="796" y="1740.8" text-anchor="end" font-size="25" fill="#8c969b">9,000,000</text><text x="796" y="1687.5" text-anchor="end" font-size="25" fill="#8c969b">10,000,000</text><text x="796" y="1634.2" text-anchor="end" font-size="25" fill="#8c969b">11,000,000</text><text x="796" y="1580.9" text-anchor="end" font-size="25" fill="#8c969b">12,000,000</text><text x="796" y="1527.6" text-anchor="end" font-size="25" fill="#8c969b">13,000,000</text><text x="3667" y="2221.0" font-size="25" fill="#8c969b">0.00</text><text x="3667" y="2121.9" font-size="25" fill="#8c969b">0.50</text><text x="3667" y="2022.9" font-size="25" fill="#8c969b">1.00</text><text x="3667" y="1923.8" font-size="25" fill="#8c969b">1.50</text><text x="3667" y="1824.8" font-size="25" fill="#8c969b">2.00</text><text x="3667" y="1725.8" font-size="25" fill="#8c969b">2.50</text><text x="3667" y="1626.7" font-size="25" fill="#8c969b">3.00</text><text x="3667" y="1527.7" font-size="25" fill="#8c969b">3.50</text><text x="935.0" y="2249.0" text-anchor="middle" font-size="25" fill="#8c969b">1<tspan class="k">월</tspan></text><text x="1171.2" y="2249.0" text-anchor="middle" font-size="25" fill="#8c969b">2<tspan class="k">월</tspan></text><text x="1407.4" y="2249.0" text-anchor="middle" font-size="25" fill="#8c969b">3<tspan class="k">월</tspan></text><text x="1643.5" y="2249.0" text-anchor="middle" font-size="25" fill="#8c969b">4<tspan class="k">월</tspan></text><text x="1879.7" y="2249.0" text-anchor="middle" font-size="25" fill="#8c969b">5<tspan class="k">월</tspan></text><text x="2115.9" y="2249.0" text-anchor="middle" font-size="25" fill="#8c969b">6<tspan class="k">월</tspan></text><text x="2352.1" y="2249.0" text-anchor="middle" font-size="25" fill="#8c969b">7<tspan class="k">월</tspan></text><text x="2588.3" y="2249.0" text-anchor="middle" font-size="25" fill="#8c969b">8<tspan class="k">월</tspan></text><text x="2824.4" y="2249.0" text-anchor="middle" font-size="25" fill="#8c969b">9<tspan class="k">월</tspan></text><text x="3060.6" y="2249.0" text-anchor="middle" font-size="25" fill="#8c969b">10<tspan class="k">월</tspan></text><text x="3296.8" y="2249.0" text-anchor="middle" font-size="25" fill="#8c969b">11<tspan class="k">월</tspan></text><text x="3533.0" y="2249.0" text-anchor="middle" font-size="25" fill="#8c969b">12<tspan class="k">월</tspan></text><path d="M803 2213.5 H815 M803 2160.2 H815 M803 2106.9 H815 M803 2053.6 H815 M803 2000.3 H815 M803 1947.0 H815 M803 1893.7 H815 M803 1840.4 H815 M803 1787.1 H815 M803 1733.8 H815 M803 1680.5 H815 M803 1627.2 H815 M803 1573.9 H815 M803 1520.6 H815 M3649.4 2213.5 H3661 M3649.4 2114.4 H3661 M3649.4 2015.4 H3661 M3649.4 1916.3 H3661 M3649.4 1817.3 H3661 M3649.4 1718.2 H3661 M3649.4 1619.2 H3661 M3649.4 1520.2 H3661 M815.0 2213.2 V2224.7 M1054.7 2213.2 V2224.7 M1290.9 2213.2 V2224.7 M1527.0 2213.2 V2224.7 M1763.2 2213.2 V2224.7 M1999.4 2213.2 V2224.7 M2235.6 2213.2 V2224.7 M2471.8 2213.2 V2224.7 M2707.9 2213.2 V2224.7 M2944.1 2213.2 V2224.7 M3180.3 2213.2 V2224.7 M3416.5 2213.2 V2224.7 M3649.4 2213.2 V2224.7" stroke="#000" stroke-width="2" fill="none"/><text transform="translate(649 1857) rotate(-90)" text-anchor="middle" font-size="27" font-weight="700" fill="#6c757d"><tspan class="k">수입량</tspan> (kg)</text><text transform="translate(3757 1857) rotate(-90)" text-anchor="middle" font-size="27" font-weight="700" fill="#6c757d"><tspan class="k">평균가격</tspan> ($/kg)</text><rect x="863.00" y="2321.34" width="48" height="70.66" fill="#5cb0ce"/><rect x="1099.18" y="2354.60" width="48" height="37.40" fill="#5cb0ce"/><rect x="1335.36" y="2327.76" width="48" height="64.24" fill="#5cb0ce"/><rect x="1571.54" y="2315.00" width="48" height="77.00" fill="#5cb0ce"/><rect x="1807.72" y="2368.24" width="48" height="23.76" fill="#5cb0ce"/><rect x="2043.90" y="2381.18" width="48" height="10.82" fill="#5cb0ce"/><rect x="2280.08" y="2383.29" width="48" height="8.71" fill="#5cb0ce"/><rect x="2516.26" y="2386.19" width="48" height="5.81" fill="#5cb0ce"/><rect x="2988.62" y="2391.16" width="48" height="0.84" fill="#5cb0ce"/><rect x="3224.80" y="2370.79" width="48" height="21.21" fill="#5cb0ce"/><rect x="3460.98" y="2291.86" width="48" height="100.14" fill="#5cb0ce"/><rect x="911.00" y="2306.82" width="48" height="85.18" fill="#437ecf"/><rect x="1147.18" y="2358.47" width="48" height="33.53" fill="#437ecf"/><rect x="1383.36" y="2366.48" width="48" height="25.52" fill="#437ecf"/><rect x="1619.54" y="2324.50" width="48" height="67.50" fill="#437ecf"/><rect x="1855.72" y="2382.94" width="48" height="9.06" fill="#437ecf"/><rect x="2091.90" y="2388.92" width="48" height="3.08" fill="#437ecf"/><rect x="2328.08" y="2390.86" width="48" height="1.14" fill="#437ecf"/><rect x="2564.26" y="2391.21" width="48" height="0.79" fill="#437ecf"/><rect x="2800.44" y="2390.42" width="48" height="1.58" fill="#437ecf"/><rect x="3036.62" y="2385.40" width="48" height="6.60" fill="#437ecf"/><rect x="3272.80" y="2368.68" width="48" height="23.32" fill="#437ecf"/><rect x="3508.98" y="2288.95" width="48" height="103.05" fill="#437ecf"/><rect x="959.00" y="2285.48" width="48" height="106.52" fill="#2b56a1"/><rect x="1195.18" y="2322.02" width="48" height="69.98" fill="#2b56a1"/><rect x="1431.36" y="2344.51" width="48" height="47.49" fill="#2b56a1"/><rect x="1667.54" y="2336.56" width="48" height="55.44" fill="#2b56a1"/><rect x="1903.72" y="2346.91" width="48" height="45.09" fill="#2b56a1"/><rect x="2139.90" y="2377.71" width="48" height="14.29" fill="#2b56a1"/><rect x="2376.08" y="2385.03" width="48" height="6.97" fill="#2b56a1"/><path clip-path="url(#nc)" d="M935.00 2325.62 C935.00 2325.62 1076.71 2333.14 1171.18 2333.14 C1265.65 2333.14 1312.89 2326.24 1407.36 2322.68 C1501.83 2319.11 1549.07 2316.40 1643.54 2315.32 C1738.01 2314.24 1785.25 2315.32 1879.72 2314.24 C1974.19 2313.16 2021.43 2293.90 2115.90 2293.90 C2210.37 2293.90 2257.61 2299.79 2352.08 2299.79 C2446.55 2299.79 2493.79 2296.19 2588.26 2296.19 C2682.73 2296.19 2729.97 2392.00 2824.44 2392.00 C2918.91 2392.00 2966.15 2315.16 3060.62 2315.16 C3155.09 2315.16 3202.33 2316.07 3296.80 2317.12 C3391.27 2318.16 3532.98 2320.39 3532.98 2320.39" fill="none" stroke="#e0ba47" stroke-width="5"/><path clip-path="url(#nc)" d="M935.00 2317.44 C935.00 2317.44 1076.71 2318.36 1171.18 2318.75 C1265.65 2319.14 1312.89 2319.41 1407.36 2319.41 C1501.83 2319.41 1549.07 2319.41 1643.54 2317.77 C1738.01 2316.14 1785.25 2310.25 1879.72 2310.25 C1974.19 2310.25 2021.43 2317.44 2115.90 2317.44 C2210.37 2317.44 2257.61 2285.40 2352.08 2285.40 C2446.55 2285.40 2493.79 2316.46 2588.26 2316.46 C2682.73 2316.46 2729.97 2302.40 2824.44 2302.40 C2918.91 2302.40 2966.15 2306.98 3060.62 2306.98 C3155.09 2306.98 3202.33 2303.71 3296.80 2303.71 C3391.27 2303.71 3532.98 2317.44 3532.98 2317.44" fill="none" stroke="#e07c4b" stroke-width="5"/><path clip-path="url(#nc)" d="M935.00 2314.83 C935.00 2314.83 1076.71 2308.61 1171.18 2308.61 C1265.65 2308.61 1312.89 2318.43 1407.36 2318.43 C1501.83 2318.43 1549.07 2318.43 1643.54 2317.44 C1738.01 2316.46 1785.25 2312.54 1879.72 2310.58 C1974.19 2308.62 2021.43 2307.63 2115.90 2307.63 C2210.37 2307.63 2257.61 2308.09 2352.08 2324.97 C2446.55 2341.84 2493.79 2392.00 2588.26 2392.00 C2682.73 2392.00 2729.97 2392.00 2824.44 2392.00 C2918.91 2392.00 2966.15 2392.00 3060.62 2392.00 C3155.09 2392.00 3202.33 2392.00 3296.80 2392.00 C3391.27 2392.00 3532.98 2392.00 3532.98 2392.00" fill="none" stroke="#e2667b" stroke-width="5"/><path d="M815 2393.0 H3650.4 M815.0 2393.0 V2405.0 M1054.7 2393.0 V2405.0 M1290.9 2393.0 V2405.0 M1527.0 2393.0 V2405.0 M1763.2 2393.0 V2405.0 M1999.4 2393.0 V2405.0 M2235.6 2393.0 V2405.0 M2471.8 2393.0 V2405.0 M2707.9 2393.0 V2405.0 M2944.1 2393.0 V2405.0 M3180.3 2393.0 V2405.0 M3416.5 2393.0 V2405.0 M3649.4 2393.0 V2405.0" stroke="#000" stroke-width="2.4" fill="none"/><text x="935.0" y="2428.5" text-anchor="middle" font-size="25" fill="#8c969b">1<tspan class="k">월</tspan></text><text x="1171.2" y="2428.5" text-anchor="middle" font-size="25" fill="#8c969b">2<tspan class="k">월</tspan></text><text x="1407.4" y="2428.5" text-anchor="middle" font-size="25" fill="#8c969b">3<tspan class="k">월</tspan></text><text x="1643.5" y="2428.5" text-anchor="middle" font-size="25" fill="#8c969b">4<tspan class="k">월</tspan></text><text x="1879.7" y="2428.5" text-anchor="middle" font-size="25" fill="#8c969b">5<tspan class="k">월</tspan></text><text x="2115.9" y="2428.5" text-anchor="middle" font-size="25" fill="#8c969b">6<tspan class="k">월</tspan></text><text x="2352.1" y="2428.5" text-anchor="middle" font-size="25" fill="#8c969b">7<tspan class="k">월</tspan></text><text x="2588.3" y="2428.5" text-anchor="middle" font-size="25" fill="#8c969b">8<tspan class="k">월</tspan></text><text x="2824.4" y="2428.5" text-anchor="middle" font-size="25" fill="#8c969b">9<tspan class="k">월</tspan></text><text x="3060.6" y="2428.5" text-anchor="middle" font-size="25" fill="#8c969b">10<tspan class="k">월</tspan></text><text x="3296.8" y="2428.5" text-anchor="middle" font-size="25" fill="#8c969b">11<tspan class="k">월</tspan></text><text x="3533.0" y="2428.5" text-anchor="middle" font-size="25" fill="#8c969b">12<tspan class="k">월</tspan></text><rect x="1629" y="2450" width="20" height="20" fill="#5cb0ce"/><text x="1661" y="2469" font-size="25" fill="#000" textLength="127" lengthAdjust="spacingAndGlyphs">2023_<tspan class="k">수입량</tspan></text><rect x="1808" y="2450" width="20" height="20" fill="#437ecf"/><text x="1840" y="2469" font-size="25" fill="#000" textLength="127" lengthAdjust="spacingAndGlyphs">2024_<tspan class="k">수입량</tspan></text><rect x="1987" y="2450" width="20" height="20" fill="#2b56a1"/><text x="2018" y="2469" font-size="25" fill="#000" textLength="127" lengthAdjust="spacingAndGlyphs">2025_<tspan class="k">수입량</tspan></text><rect x="2166" y="2450" width="20" height="20" fill="#e0ba47"/><text x="2197" y="2469" font-size="25" fill="#000" textLength="148" lengthAdjust="spacingAndGlyphs">2023_<tspan class="k">평균가격</tspan></text><rect x="2366" y="2450" width="20" height="20" fill="#e07c4b"/><text x="2397" y="2469" font-size="25" fill="#000" textLength="148" lengthAdjust="spacingAndGlyphs">2024_<tspan class="k">평균가격</tspan></text><rect x="2565" y="2450" width="20" height="20" fill="#e2667b"/><text x="2597" y="2469" font-size="25" fill="#000" textLength="148" lengthAdjust="spacingAndGlyphs">2025_<tspan class="k">평균가격</tspan></text></svg>
</body></html>
